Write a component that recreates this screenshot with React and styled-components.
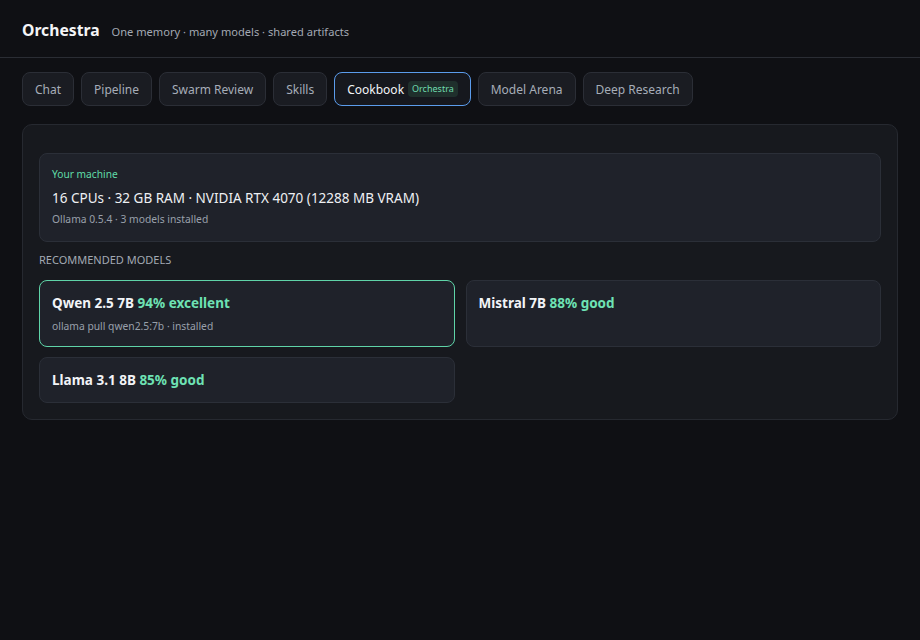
import React from 'react'
import styled, { createGlobalStyle, css } from 'styled-components'

const GlobalStyle = createGlobalStyle`
    html, body {
        margin: 0;
        background: #0f1014;
        color: #e6e8eb;
        font-family: "Noto Sans", "Open Sans", sans-serif;
    }
`;

const Page = styled.div`
    min-height: 640px;
    background: #0f1014;
`;

const Header = styled.header`
    display: flex;
    align-items: baseline;
    gap: 12px;
    height: 58px;
    box-sizing: border-box;
    padding: 19px 22px 0;
    border-bottom: 1px solid #2a2d34;
`;

const Brand = styled.h1`
    margin: 0;
    font-size: 15.7px;
    line-height: 22px;
    font-weight: 700;
    color: #f4f5f7;
`;

const Tagline = styled.span`
    font-size: 11.1px;
    line-height: 16px;
    color: #a3a9b3;
`;

const Main = styled.main`
    padding: 14px 22px;
`;

const Tabs = styled.nav`
    display: flex;
    gap: 7px;
    margin-bottom: 18px;
`;

const Tab = styled.button`
    display: flex;
    align-items: center;
    gap: 4px;
    height: 34px;
    padding: 0 12px;
    font-family: inherit;
    font-size: 12px;
    color: #a6adb8;
    background: #1a1c22;
    border: 1px solid #2b2e36;
    border-radius: 8px;
    ${p => p.$active && css`
        color: #f2f4f7;
        background: #16181e;
        border-color: #5b9cec;
    `}
`;

const Badge = styled.span`
    font-size: 9px;
    line-height: 12px;
    padding: 2px 4px;
    border-radius: 4px;
    background: #1f2f2c;
    color: #6fdcae;
`;

const Panel = styled.section`
    background: #17191e;
    border: 1px solid #262930;
    border-radius: 10px;
    padding: 28px 16px 16px;
`;

const MachineCard = styled.div`
    background: #1f222a;
    border: 1px solid #2b2f38;
    border-radius: 8px;
    padding: 13px 12px 15px;
`;

const Label = styled.div`
    font-size: 10.2px;
    line-height: 14px;
    color: #5fdca8;
`;

const Specs = styled.div`
    margin-top: 7px;
    font-size: 13.5px;
    line-height: 20px;
    color: #eef0f3;
`;

const Sub = styled.div`
    margin-top: ${p => p.$top || 4}px;
    font-size: 10.3px;
    line-height: ${p => p.$lh || 14}px;
    color: #99a0ab;
`;

const SectionTitle = styled.h2`
    margin: 11px 0 13px;
    font-size: 11px;
    line-height: 14px;
    font-weight: 400;
    color: #a3a9b3;
`;

const Grid = styled.div`
    display: grid;
    grid-template-columns: 1fr 1fr;
    gap: 10px 11px;
`;

const ModelCard = styled.div`
    background: #1f222a;
    border: 1px solid ${p => (p.$selected ? '#5fd4a8' : '#2b2f38')};
    border-radius: 8px;
    padding: 12px;
`;

const ModelName = styled.div`
    font-size: 13.5px;
    line-height: 20px;
    font-weight: 700;
    color: #f2f4f7;
`;

const Score = styled.span`
    color: #6ee2b4;
`;

const tabs = ['Chat', 'Pipeline', 'Swarm Review', 'Skills', 'Cookbook', 'Model Arena', 'Deep Research'];

const models = [
    { name: 'Qwen 2.5 7B', score: '94% excellent', cmd: 'ollama pull qwen2.5:7b · installed', selected: true },
    { name: 'Mistral 7B', score: '88% good' },
    { name: 'Llama 3.1 8B', score: '85% good' },
];

const App = () => {
    return (
        <Page>
            <GlobalStyle />
            <Header>
                <Brand>Orchestra</Brand>
                <Tagline>One memory · many models · shared artifacts</Tagline>
            </Header>
            <Main>
                <Tabs>
                    {tabs.map(t => (
                        <Tab key={t} $active={t === 'Cookbook'}>
                            {t}
                            {t === 'Cookbook' && <Badge>Orchestra</Badge>}
                        </Tab>
                    ))}
                </Tabs>
                <Panel>
                    <MachineCard>
                        <Label>Your machine</Label>
                        <Specs>16 CPUs · 32 GB RAM · NVIDIA RTX 4070 (12288 MB VRAM)</Specs>
                        <Sub>Ollama 0.5.4 · 3 models installed</Sub>
                    </MachineCard>
                    <SectionTitle>RECOMMENDED MODELS</SectionTitle>
                    <Grid>
                        {models.map(m => (
                            <ModelCard key={m.name} $selected={m.selected}>
                                <ModelName>{m.name} <Score>{m.score}</Score></ModelName>
                                {m.cmd && <Sub $top={5} $lh={16}>{m.cmd}</Sub>}
                            </ModelCard>
                        ))}
                    </Grid>
                </Panel>
            </Main>
        </Page>
    )
}

export default App;
